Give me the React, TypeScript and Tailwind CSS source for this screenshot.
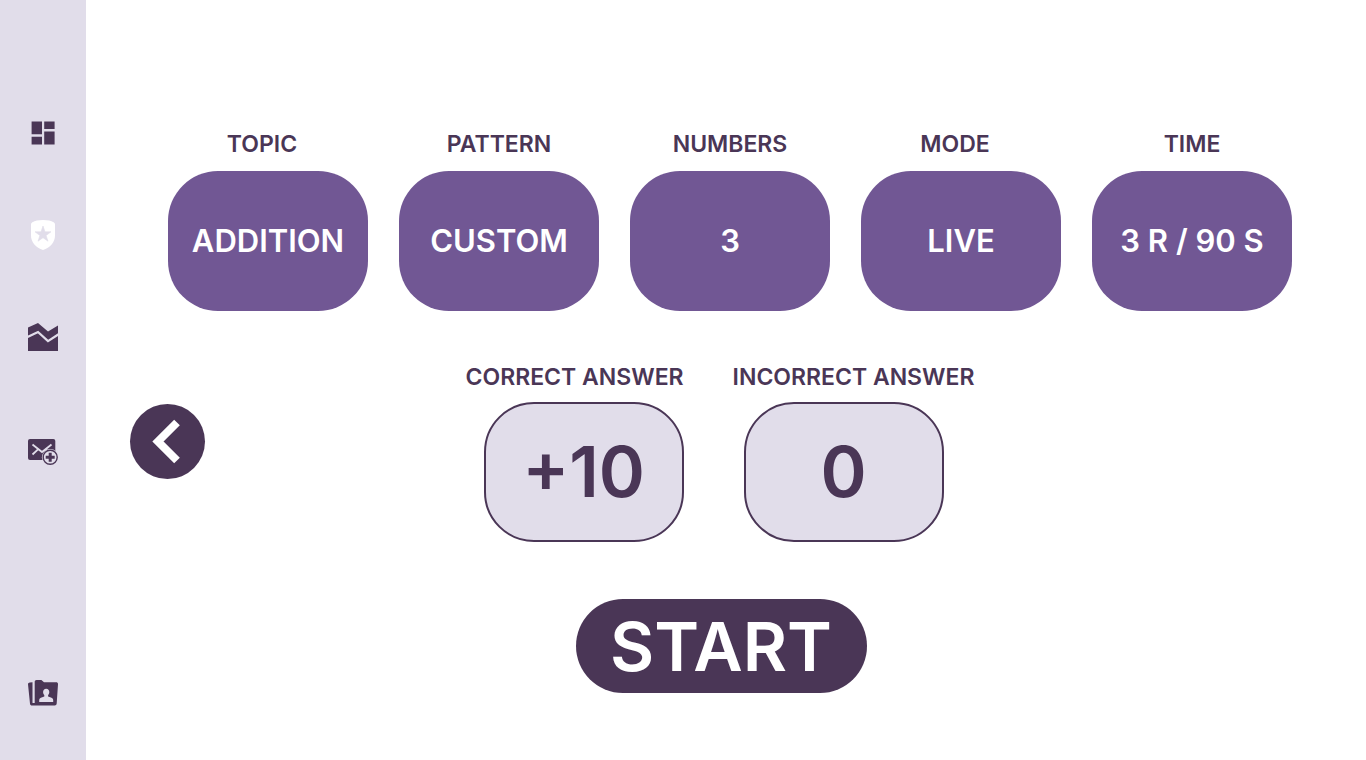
import type { ReactNode } from "react";

const settings = [
  { label: "TOPIC", value: "ADDITION", labelClass: "pr-3" },
  { label: "PATTERN", value: "CUSTOM", labelClass: "" },
  { label: "NUMBERS", value: "3", labelClass: "" },
  { label: "MODE", value: "LIVE", labelClass: "pr-3" },
  { label: "TIME", value: "3 R / 90 S", labelClass: "" },
];

function NavLink({ label, className, children }: { label: string; className: string; children: ReactNode }) {
  return (
    <a href="#" aria-label={label} className={`block ${className}`}>
      <svg width="30" height="30" viewBox="0 0 30 30" fill="currentColor" aria-hidden="true">
        {children}
      </svg>
    </a>
  );
}

function Sidebar() {
  return (
    <nav className="flex w-[86px] shrink-0 flex-col items-center bg-[#e1ddea] pt-[118px] pb-[52px] text-[#4a3656]">
      <NavLink label="Dashboard" className="mb-[72px]">
        <path d="M3.6 3.6h10.4v12.6H3.6zM16.2 3.6h10.4v7.4H16.2zM3.6 18.8h10.4v7.6H3.6zM16.2 13.6h10.4v12.8H16.2z" />
      </NavLink>
      <NavLink label="Ranking" className="mb-[72px] text-white">
        <path d="M15 0c4.6 0 8.2.9 10.6 2.2.9.5 1.400 1.300 1.400 2.300V15.500c0 6.800-5 12.200-12 14.500C8 27.700 3 22.300 3 15.500V4.500c0-1 .5-1.800 1.400-2.300C6.800.9 10.400 0 15 0z" />
        <path
          d="M15 6l-2 5.800H7l4.900 3.700-1.900 5.700 5-3.500 5 3.500-1.900-5.700 4.900-3.700h-6z"
          fill="#e1ddea"
          stroke="#e1ddea"
          strokeWidth=".6"
        />
      </NavLink>
      <NavLink label="Statistics" className="mb-[84px]">
        <path d="M0 5.500 10 1l10 8.600L30 3.600V29H0z" />
        <path d="M-1 15.300 10 10l10 9.100 11-7.100" fill="none" stroke="#e1ddea" strokeWidth="2.300" />
      </NavLink>
      <NavLink label="Invitations" className="mb-auto">
        <rect x="0" y="3" width="27.300" height="21" rx="2" />
        <path d="M4.500 8.500 14 16l9.500-7.500M4.500 18.500 10 13.300M17 13.300l3.500 2.500" fill="none" stroke="#e1ddea" strokeWidth="1.800" />
        <circle cx="22.200" cy="21.300" r="8.300" fill="#e1ddea" />
        <circle cx="22.200" cy="21.300" r="7" fill="none" stroke="currentColor" strokeWidth="1.400" />
        <path d="M20.700 16.800h3v3h3v3h-3v3h-3v-3h-3v-3h3z" />
      </NavLink>
      <NavLink label="Profile" className="">
        <path d="M0 6.200C0 5.200.8 4.600 1.800 4.500L4.500 4.200v20.800h2.200V3.800c0-1.100.8-1.800 1.800-1.800h4.900l2.600 2.300h12.200c1.200 0 1.900.8 1.800 1.900L28.700 25.600c-.1 1.200-.9 1.900-2 1.900H4c-1.100 0-1.900-.7-2-1.800z" />
        <path
          fill="#e1ddea"
          d="M18.200 10.800c1.900 0 3.100 1.300 3.100 3.200 0 1.400-.5 2.400-1.200 3.100v1.400l3.400 1.300c1.200.5 1.700 1.300 1.700 2.400v1.700h-14v-1.700c0-1.100.5-1.900 1.700-2.400l3.400-1.300v-1.400c-.7-.7-1.200-1.700-1.200-3.100 0-1.900 1.200-3.200 3.100-3.200z"
        />
      </NavLink>
    </nav>
  );
}

const labelText = "text-[23px] leading-8 font-semibold whitespace-nowrap";
const scoreBox =
  "flex h-[140px] w-[200px] items-center justify-center rounded-[50px] border-2 border-[#4a3656] bg-[#e1ddea] text-[70px] leading-none font-semibold";

export default function App() {
  return (
    <div className="flex min-h-screen bg-white font-['Inter','Liberation_Sans',sans-serif] text-[#4a3656]">
      <Sidebar />
      <main className="min-w-0 flex-1 pt-[128px]">
        <dl className="flex justify-between pr-[74px] pl-[82px]">
          {settings.map((item) => (
            <div key={item.label} className="w-[200px]">
              <dt className={`mb-[11px] text-center ${labelText} ${item.labelClass}`}>{item.label}</dt>
              <dd className="flex h-[140px] items-center justify-center rounded-[50px] bg-[#715794] text-[31px] font-semibold whitespace-nowrap text-white">
                {item.value}
              </dd>
            </div>
          ))}
        </dl>

        <div className="mt-[50px] grid grid-cols-[75px_1fr_75px] items-center pr-14 pl-11">
          <button
            type="button"
            aria-label="Back"
            className="mb-5 flex size-[75px] items-center justify-center rounded-full bg-[#4a3656] text-white"
          >
            <svg width="75" height="75" viewBox="0 0 75 75" fill="none" stroke="currentColor" strokeWidth="8" aria-hidden="true">
              <path d="M47 18.500 28 37.500 47 56.500" />
            </svg>
          </button>
          <dl className="flex justify-center gap-[49px]">
            <div className="flex flex-col items-end">
              <dt className={`mb-[9px] ${labelText}`}>CORRECT ANSWER</dt>
              <dd className={scoreBox}>+10</dd>
            </div>
            <div className="flex flex-col items-start">
              <dt className={`mb-[9px] ${labelText}`}>INCORRECT ANSWER</dt>
              <dd className="pl-[11px]">
                <div className={scoreBox}>0</div>
              </dd>
            </div>
          </dl>
        </div>

        <div className="mt-[57px] flex justify-center pr-[54px] pl-11">
          <button
            type="button"
            className="flex h-[94px] w-[291px] items-center justify-center rounded-full bg-[#4a3656] text-[68px] leading-none font-semibold text-white"
          >
            START
          </button>
        </div>
      </main>
    </div>
  );
}
